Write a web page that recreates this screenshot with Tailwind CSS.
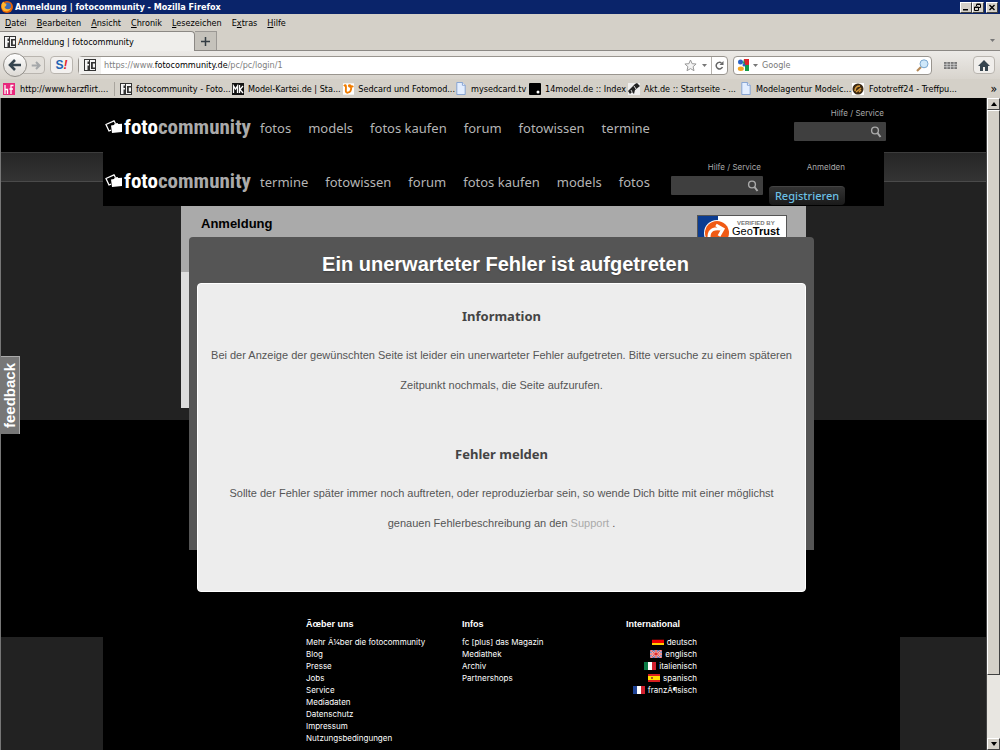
<!DOCTYPE html>
<html lang="de">
<head>
<meta charset="utf-8">
<title>Anmeldung | fotocommunity</title>
<script src="https://cdn.jsdelivr.net/npm/@tailwindcss/browser@4"></script>
</head>
<body class="flex min-h-screen flex-col overflow-x-hidden bg-black font-['Liberation_Sans',Arial,sans-serif]">
<svg class="hidden">
  <symbol id="fc" viewBox="0 0 12 12"><path fill="#333" d="M0 0h12v12H0z"/><path fill="#f5f5f5" d="M1 1h4v1.500H3.500V5H5v1.500H3.500V11H1zM6 1h5v10H6z"/><path fill="#333" d="M7 3h4v1.500H8.800v4H11V10H7z"/></symbol>
  <symbol id="page" viewBox="0 0 12 14"><path fill="#e3eeff" stroke="#7f9fd0" d="M1.500.5h6l3 3v10h-9z"/><path fill="#fff" stroke="#7f9fd0" d="M7.500.5v3h3"/></symbol>
  <symbol id="photos" viewBox="0 0 18 16"><path fill="none" stroke="#fff" stroke-width="1.300" d="M10.500 4.500 9 1.800 1 5.500l3 6.500 2-.8"/><path fill="#fff" d="m6 6.500 3-.5.8-1.500 2.700-.5.8 1L17 4.800V13l-10 1z"/></symbol>
  <symbol id="lens" viewBox="0 0 12 12"><circle cx="5" cy="4.500" r="3.400" fill="none" stroke="#aaa" stroke-width="1.400"/><path stroke="#aaa" stroke-width="2" d="m7.500 7 3 4"/></symbol>
</svg>

<div class="shrink-0 bg-[#d4d0c8] font-['DejaVu_Sans_Condensed','DejaVu_Sans',sans-serif] text-[9px] leading-3 text-black">
  <div class="flex h-[14px] items-center bg-[#0a246a] pr-[2px] pl-[1px]">
    <svg class="h-3 w-3" viewBox="0 0 12 12"><circle cx="6" cy="6" r="6" fill="#e66000"/><circle cx="6.500" cy="5" r="3.500" fill="#3b6cb5"/><path fill="#ffb52e" d="M.5 3C1 2 2 1 2.500.5 3 2 4 2.500 5.500 3L5 5 3.500 6c1 2.500 4 3 6.500 1-1 3-4 4-7 3C1 8.500 0 6 .5 3z"/></svg>
    <h1 class="ml-[2px] text-[9px] font-bold text-white">Anmeldung | fotocommunity - Mozilla Firefox</h1>
    <div class="ml-auto flex">
      <button aria-label="Minimieren" class="h-[11px] w-3 border border-t-white border-r-[#404040] border-b-[#404040] border-l-white bg-[#d4d0c8]"><svg viewBox="0 0 10 9"><path fill="#000" d="M2 6h5v1.500H2z"/></svg></button>
      <button aria-label="Verkleinern" class="h-[11px] w-3 border border-t-white border-r-[#404040] border-b-[#404040] border-l-white bg-[#d4d0c8]"><svg viewBox="0 0 10 9"><path fill="none" stroke="#000" d="M3.500 3V1.500h4v3H6M1.500 4h4v3.500h-4zM3.500 1h4M1.500 4.500h4"/></svg></button>
      <button aria-label="Schließen" class="ml-[2px] h-[11px] w-3 border border-t-white border-r-[#404040] border-b-[#404040] border-l-white bg-[#d4d0c8]"><svg viewBox="0 0 10 9"><path stroke="#000" stroke-width="1.400" d="m2.500 2 5 5m0-5-5 5"/></svg></button>
    </div>
  </div>
  <nav class="flex h-[17px] items-center gap-[10px] pl-[5px]" aria-label="Menü">
    <button><u>D</u>atei</button><button><u>B</u>earbeiten</button><button><u>A</u>nsicht</button><button><u>C</u>hronik</button><button><u>L</u>esezeichen</button><button>E<u>x</u>tras</button><button><u>H</u>ilfe</button>
  </nav>
  <div class="flex h-5 items-stretch border-b border-[#8b8884]">
    <div class="-mb-px flex w-[195px] items-center gap-[2px] rounded-tr-sm border-t border-r border-[#8b8884] bg-[#efeeeb] pl-1"><svg class="h-3 w-3"><use href="#fc"/></svg>Anmeldung | fotocommunity</div>
    <button aria-label="Neuer Tab" class="flex w-[22px] items-center justify-center border-t border-r border-[#9b9894] bg-[#c5c2bb]"><svg class="h-[9px] w-[9px]" viewBox="0 0 9 9"><path stroke="#333c42" stroke-width="1.500" d="M4.500 0v9M0 4.500h9"/></svg></button>
    <button aria-label="Alle Tabs" class="mr-[5px] ml-auto"><svg class="h-1 w-[5px]" viewBox="0 0 5 4"><path fill="#777" d="M0 0h5L2.500 3z"/></svg></button>
  </div>
  <div class="flex h-7 items-center bg-linear-to-b from-[#eceae7] to-[#d8d4cd] pr-[5px] pl-[3px]">
    <button aria-label="Zurück" class="z-10 flex h-6 w-6 shrink-0 items-center justify-center rounded-full border border-[#928f8a] bg-linear-to-b from-white to-[#dddad5]"><svg class="h-3 w-[14px]" viewBox="0 0 14 12"><path fill="none" stroke="#36454f" stroke-width="2.600" d="M7 1 2 6l5 5M2 6h11"/></svg></button>
    <button aria-label="Vor" class="-ml-1 flex h-[18px] w-[22px] shrink-0 items-center justify-center rounded-r-sm border border-[#b9b5af] bg-[#e3e0db] pl-1"><svg class="h-[9px] w-[10px]" viewBox="0 0 14 12"><path fill="none" stroke="#a5a8aa" stroke-width="2.800" d="m7 1 5 5-5 5M12 6H1"/></svg></button>
    <button aria-label="S!" class="ml-[5px] flex h-[18px] w-[23px] shrink-0 items-center justify-center rounded-sm border border-[#b9b5af] bg-[#f3f1ef] font-['Liberation_Sans'] text-[12px] font-bold text-[#2163b4]">S<span class="text-[#e3242b] italic">!</span></button>
    <div class="ml-[5px] flex h-[19px] min-w-0 flex-1 items-center rounded-sm border border-[#99958f] bg-white">
      <div class="flex h-full w-[22px] items-center justify-center bg-[#f1f0ee]"><svg class="h-3 w-3"><use href="#fc"/></svg></div>
      <div class="ml-[3px] flex-1 text-[#808080]">https://www.<span class="text-black">fotocommunity.de</span>/pc/pc/login/1</div>
      <button aria-label="Lesezeichen setzen"><svg class="h-[13px] w-[13px]" viewBox="0 0 13 13"><path fill="#f4f4f4" stroke="#999" d="m6.500 1 1.600 3.700 4 .3-3 2.700.9 4-3.500-2.100L3 11.700l.9-4-3-2.700 4-.3z"/></svg></button>
      <svg class="mr-1 ml-[5px] h-[3px] w-[5px]" viewBox="0 0 5 3"><path fill="#777" d="M0 0h5L2.500 3z"/></svg>
      <button aria-label="Neu laden" class="flex h-full w-4 items-center justify-center border-l border-[#b5b2ad]"><svg class="h-[9px] w-[9px]" viewBox="0 0 9 9"><path fill="none" stroke="#666" stroke-width="1.500" d="M6.500 2A3.300 3.300 0 1 0 7.500 6"/><path fill="#666" d="M8.500 0v4h-4z"/></svg></button>
    </div>
    <div class="ml-[5px] flex h-[19px] w-[199px] shrink-0 items-center rounded-sm border border-[#99958f] bg-white pr-[2px] pl-[3px]">
      <svg class="h-3 w-3" viewBox="0 0 12 12"><path fill="#139c48" d="M6 0h6v12H8L6 5z"/><path fill="#e0242b" d="M7 0h5v6H8z"/><path fill="#fff" d="M0 0h7l-1 4 2 3v5H0z"/><circle cx="3.500" cy="3" r="2.500" fill="#2c63c4"/><circle cx="7" cy="6" r="1.500" fill="#2c63c4"/><ellipse cx="3.800" cy="9.800" rx="3" ry="2.200" fill="#f5a623"/></svg>
      <svg class="ml-[4px] h-[3px] w-[5px]" viewBox="0 0 5 3"><path fill="#777" d="M0 0h5L2.500 3z"/></svg>
      <input aria-label="Suche" placeholder="Google" class="ml-1 min-w-0 flex-1 outline-none placeholder:text-[#777]">
      <svg class="h-[13px] w-[13px]" viewBox="0 0 13 13"><path stroke="#b58a58" stroke-width="2.200" d="m1 12 4-4"/><circle cx="8" cy="4.800" r="4" fill="#cfe8fa" stroke="#7aa7cf"/></svg>
    </div>
    <svg class="ml-3 h-[9px] w-[13px] shrink-0" viewBox="0 0 13 9"><path fill="#777" d="M0 1h13v7H0z"/><path stroke="#ddd" stroke-width=".7" d="M0 3.300h13M0 5.700h13M3 1v7M6.500 1v7M10 1v7"/></svg>
    <button aria-label="Startseite" class="ml-4 flex h-[18px] w-[22px] shrink-0 items-center justify-center rounded-sm border border-[#b9b5af] bg-[#f0eeeb]"><svg class="h-[11px] w-3" viewBox="0 0 12 11"><path fill="#36454f" d="M6 0 0 6h2v5h3V7h2v4h3V6h2z"/></svg></button>
  </div>
  <nav class="flex h-[19px] items-center pl-[3px] whitespace-nowrap" aria-label="Lesezeichen">
    <a href="#" class="flex w-[111px] shrink-0 items-center gap-[5px]"><svg class="h-3 w-3" viewBox="0 0 12 12"><path fill="#e8277c" d="M0 0h12v12H0z"/><path fill="none" stroke="#fff" stroke-width="1.300" d="M2 2v9M2 6.500h2.500V11M10.500 2.500H8V11M6.500 6h3.500"/></svg>http://www.harzflirt....</a>
    <span class="mr-[5px] h-[14px] border-l border-[#a9a59e]"></span>
    <a href="#" class="flex w-[112px] shrink-0 items-center gap-1"><svg class="h-3 w-3"><use href="#fc"/></svg>fotocommunity - Foto...</a>
    <a href="#" class="flex w-[111px] shrink-0 items-center gap-1"><svg class="h-3 w-3" viewBox="0 0 12 12"><path fill="#111" d="M0 0h12v12H0z"/><path fill="none" stroke="#fff" stroke-width="1.300" d="M1.500 10V3L3.500 6l2-3v7M7.500 2v8M11 3 8 6.500 11 10"/></svg>Model-Kartei.de | Sta...</a>
    <a href="#" class="flex w-[112px] shrink-0 items-center gap-1"><svg class="h-3 w-3" viewBox="0 0 12 12"><path fill="#fff" d="M0 0h12v12H0z"/><path fill="none" stroke="#f07c00" stroke-width="2" d="M1 3c3-3 2 2 2 5s4 2 5 0 1-6-1-6 0 3 4 1"/></svg>Sedcard und Fotomod...</a>
    <a href="#" class="flex w-[74px] shrink-0 items-center gap-1"><svg class="h-[13px] w-3"><use href="#page"/></svg>mysedcard.tv</a>
    <a href="#" class="flex w-[99px] shrink-0 items-center gap-1"><svg class="h-3 w-3" viewBox="0 0 12 12"><rect width="12" height="12" rx="1"/><circle cx="9" cy="9" r="1.500" fill="#fff"/></svg>14model.de :: Index</a>
    <a href="#" class="flex w-[112px] shrink-0 items-center gap-1"><svg class="h-3 w-3" viewBox="0 0 12 12"><path fill="#eee" d="M0 0h12v12H0z"/><path fill="#222" d="m0 8 7-7 2-1 3 3-5 4-1 4-2-2-2 2z"/><path stroke="#ddd" d="m3 7 1 2M6 3l2 3"/></svg>Akt.de :: Startseite - ...</a>
    <a href="#" class="flex w-[112px] shrink-0 items-center gap-1"><svg class="h-[13px] w-3"><use href="#page"/></svg>Modelagentur Modelc...</a>
    <a href="#" class="flex shrink-0 items-center gap-[5px]"><svg class="h-3 w-3" viewBox="0 0 12 12"><path fill="#fff" d="M0 0h12v12H0z"/><circle cx="6" cy="6" r="5.500" fill="#3c2a14"/><path fill="none" stroke="#d99b3c" stroke-width="1.500" d="M3 8c0-4 2-5 5-5M4 9l5-4M7 9l2-2"/></svg>Fototreff24 - Treffpu...</a>
    <button aria-label="Weitere Lesezeichen" class="mr-[3px] ml-auto text-[12px]">»</button>
  </nav>
</div>

<div class="flex flex-1 border-l border-[#777]">
  <div class="relative flex min-w-0 flex-1 flex-col bg-[#222]">
    <header class="bg-black">
      <div class="mx-auto flex h-[54px] w-[781px]">
        <a href="#" class="mt-[17px] flex h-6 w-[157px] items-center pl-[2px] text-white"><svg class="mr-px h-4 w-[18px]"><use href="#photos"/></svg><span class="font-['Liberation_Sans_Narrow','Roboto_Condensed'] text-[21px] leading-6 font-bold">foto<span class="text-[#aaa]">community</span></span></a>
        <nav class="mt-5 flex h-5 gap-[17px] font-['Noto_Sans',sans-serif] text-[13px] leading-5 whitespace-nowrap text-[#b5b5b5]"><a href="#">fotos</a><a href="#">models</a><a href="#">fotos kaufen</a><a href="#">forum</a><a href="#">fotowissen</a><a href="#">termine</a></nav>
        <div class="-mr-[2px] ml-auto flex w-[92px] flex-col gap-[3px] pt-[9px] text-right font-[Inter,sans-serif] text-[8px] leading-3 text-[#aaa]">
          <a href="#" class="pr-[2px]">Hilfe / Service</a>
          <label class="flex h-[19px] items-center rounded-[1px] bg-[#3f3f3f] pr-1"><input aria-label="Suchen" class="min-w-0 flex-1 outline-none"><svg class="h-3 w-3"><use href="#lens"/></svg></label>
        </div>
      </div>
    </header>

    <main class="flex h-[268px] flex-col">
      <div class="h-[30px] shrink-0 border-t border-b border-t-[#3c3c3c] border-b-[#4a4a4a] bg-linear-to-b from-[#262626] to-[#343434]">
        <div class="relative z-10 mx-auto -mt-px flex h-[54px] w-[781px] bg-black">
          <a href="#" class="mt-[17px] flex h-6 w-[157px] items-center pl-[2px] text-white"><svg class="mr-px h-4 w-[18px]"><use href="#photos"/></svg><span class="font-['Liberation_Sans_Narrow','Roboto_Condensed'] text-[21px] leading-6 font-bold">foto<span class="text-[#aaa]">community</span></span></a>
          <nav class="mt-5 flex h-5 gap-[17px] font-['Noto_Sans',sans-serif] text-[13px] leading-5 whitespace-nowrap text-[#b5b5b5]"><a href="#">termine</a><a href="#">fotowissen</a><a href="#">forum</a><a href="#">fotos kaufen</a><a href="#">models</a><a href="#">fotos</a></nav>
          <div class="mr-[6px] ml-auto flex w-[92px] flex-col gap-[3px] pt-[9px] text-right font-[Inter,sans-serif] text-[8px] leading-3 text-[#aaa]">
            <a href="#" class="pr-[2px]">Hilfe / Service</a>
            <label class="flex h-[19px] items-center rounded-[1px] bg-[#3f3f3f] pr-1"><input aria-label="Suchen" class="min-w-0 flex-1 outline-none"><svg class="h-3 w-3"><use href="#lens"/></svg></label>
          </div>
          <div class="mr-[39px] flex w-[76px] flex-col justify-between pt-[9px] pb-px text-right font-[Inter,sans-serif] text-[8px] leading-3 text-[#aaa]">
            <a href="#">Anmelden</a>
            <button class="h-[19px] rounded border-t border-[#444] bg-linear-to-b from-[#333] to-[#1a1a1a] font-['Noto_Sans',sans-serif] text-[11px] leading-[18px] font-medium text-[#6cc0e5]">Registrieren</button>
          </div>
        </div>
      </div>
      <section class="mx-auto mt-6 flex h-[202px] w-[625px] flex-col bg-[#ddd]">
        <div class="flex h-[66px] items-start justify-between bg-[#aaa] pt-[9px] pr-[19px] pl-5">
          <h2 class="text-[13px] leading-[18px] font-bold">Anmeldung</h2>
          <a href="#" aria-label="Verified by GeoTrust" class="flex h-8 w-[90px] border border-[#555] bg-white">
            <svg class="h-[30px] w-[34px]" viewBox="0 0 34 30"><path fill="#0b3c91" d="M0 0h20v6L8 15v15H0z"/><circle cx="19" cy="17" r="13" fill="#fff"/><circle cx="19" cy="17" r="12" fill="#f05a14"/><path fill="none" stroke="#fff" stroke-width="3" d="M11 21c0-8 6-9 12-8M18 9l7 4-4 7"/></svg>
            <span class="font-['Liberation_Sans'] text-[11px] leading-[10px]"><span class="block pt-1 pl-[5px] text-[6px] leading-[6px] font-bold text-[#777]">VERIFIED BY</span>Geo<b>Trust</b></span>
          </a>
        </div>
      </section>
    </main>

    <div class="h-[217px] bg-black"></div>

    <footer class="mx-auto flex w-[781px] flex-1 flex-col">
      <div class="-mr-4 flex-1 bg-black">
        <div class="-mt-[19px] flex pl-[203px] text-[8px] leading-3 text-white">
          <section class="w-[156px]"><h3 class="mb-[6px] text-[9px] font-bold">Ãœber uns</h3>
            <ul class="font-[Inter,sans-serif]"><li><a href="#">Mehr Ã¼ber die fotocommunity</a></li><li><a href="#">Blog</a></li><li><a href="#">Presse</a></li><li><a href="#">Jobs</a></li><li><a href="#">Service</a></li><li><a href="#">Mediadaten</a></li><li><a href="#">Datenschutz</a></li><li><a href="#">Impressum</a></li><li><a href="#">Nutzungsbedingungen</a></li></ul></section>
          <section class="w-[164px]"><h3 class="mb-[6px] text-[9px] font-bold">Infos</h3>
            <ul class="font-[Inter,sans-serif]"><li><a href="#">fc [plus] das Magazin</a></li><li><a href="#">Mediathek</a></li><li><a href="#">Archiv</a></li><li><a href="#">Partnershops</a></li></ul></section>
          <section class="w-[71px]"><h3 class="mb-[6px] text-[9px] font-bold">International</h3>
            <ul class="font-[Inter,sans-serif]">
              <li><a href="#" class="flex items-center justify-end gap-[3px]"><svg class="h-[6px] w-3" viewBox="0 0 12 6"><path fill="#400" d="M0 0h12v1H0z"/><path fill="#e00" d="M0 1h12v3H0z"/><path fill="#fc0" d="M0 4h12v2H0z"/></svg>deutsch</a></li>
              <li><a href="#" class="flex items-center justify-end gap-[3px]"><svg class="h-[8px] w-3" viewBox="0 0 12 8"><path fill="#5a68a8" d="M0 0h12v8H0z"/><path stroke="#fff" stroke-width="1.600" d="m0 0 12 8M12 0 0 8"/><path stroke="#fff" stroke-width="2.400" d="M6 0v8M0 4h12"/><path stroke="#d22" stroke-width=".9" d="m0 0 12 8M12 0 0 8"/><path stroke="#d22" stroke-width="1.200" d="M6 0v8M0 4h12"/></svg>englisch</a></li>
              <li><a href="#" class="flex items-center justify-end gap-[3px]"><svg class="h-[8px] w-3" viewBox="0 0 12 8"><path fill="#fff" d="M0 0h12v8H0z"/><path fill="#0a7a45" d="M0 0h4v8H0z"/><path fill="#d0202e" d="M8 0h4v8H8z"/></svg>italienisch</a></li>
              <li><a href="#" class="flex items-center justify-end gap-[3px]"><svg class="h-[8px] w-3" viewBox="0 0 12 8"><path fill="#d81e1e" d="M0 0h12v8H0z"/><path fill="#fd0" d="M0 2h12v4H0z"/><path fill="#a52" d="M3 3h2v2H3z"/></svg>spanisch</a></li>
              <li><a href="#" class="flex items-center justify-end gap-[3px]"><svg class="h-[8px] w-3" viewBox="0 0 12 8"><path fill="#fff" d="M0 0h12v8H0z"/><path fill="#1f4396" d="M0 0h4v8H0z"/><path fill="#d0202e" d="M8 0h4v8H8z"/></svg>franzÃ¶sisch</a></li>
            </ul></section>
        </div>
      </div>
    </footer>

    <div role="dialog" aria-labelledby="err" class="absolute inset-x-0 top-[139px] z-20 mx-auto h-[313px] w-[625px] translate-x-2 rounded-t bg-[#555] px-2">
      <h2 id="err" class="pt-[13px] pb-[5px] pl-2 text-center text-[20px] leading-7 font-bold text-white text-shadow-sm">Ein unerwarteter Fehler ist aufgetreten</h2>
      <div class="rounded border border-white bg-[#ededed] px-2 pb-[53px] text-center text-[11px] leading-[30px] text-[#555]">
        <h3 class="mt-[17px] mb-[9px] font-['Noto_Sans',sans-serif] text-[13px] font-bold text-[#444]">Information</h3>
        <p>Bei der Anzeige der gewünschten Seite ist leider ein unerwarteter Fehler aufgetreten. Bitte versuche zu einem späteren Zeitpunkt nochmals, die Seite aufzurufen.</p>
        <h3 class="mt-[39px] mb-[9px] font-['Noto_Sans',sans-serif] text-[13px] font-bold text-[#444]">Fehler melden</h3>
        <p class="px-4">Sollte der Fehler später immer noch auftreten, oder reproduzierbar sein, so wende Dich bitte mit einer möglichst genauen Fehlerbeschreibung an den <a href="#" class="text-[#aaa]">Support</a> .</p>
      </div>
    </div>

    <button class="absolute top-[258px] left-0 z-20 flex h-[78px] w-[19px] items-center justify-center border-t border-r border-[#aaa] bg-[#777] text-[15px] leading-4 font-bold text-white"><span class="rotate-180 [writing-mode:vertical-rl]">feedback</span></button>
  </div>

  <div class="flex w-[14px] shrink-0 flex-col border-l border-[#444] bg-[#e8e6e1]" aria-hidden="true">
    <div class="flex h-3 items-center justify-center border border-t-white border-r-[#404040] border-b-[#404040] border-l-white bg-[#d4d0c8]"><svg class="h-1 w-[6px]" viewBox="0 0 6 4"><path d="M3 0 6 4H0z"/></svg></div>
    <div class="h-[565px] border border-t-white border-r-[#404040] border-b-[#404040] border-l-white bg-[#d4d0c8]"></div>
    <div class="mt-auto flex h-3 items-center justify-center border border-t-white border-r-[#404040] border-b-[#404040] border-l-white bg-[#d4d0c8]"><svg class="h-1 w-[6px]" viewBox="0 0 6 4"><path d="M0 0h6L3 4z"/></svg></div>
  </div>
</div>
</body>
</html>
